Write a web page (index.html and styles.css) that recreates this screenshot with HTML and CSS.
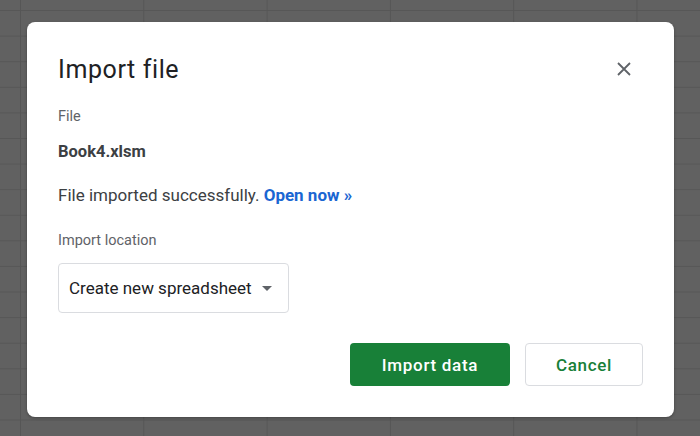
FILE: index.html
```html
<!DOCTYPE html>
<html lang="en">
<head>
    <meta charset="UTF-8">
    <title>Import file</title>
    <link rel="stylesheet" href="styles.css">
</head>
<body>
    <div class="sheet">
        <div class="dialog">
            <div class="dialogHead">
                <h1 class="title">Import file</h1>
                <button class="closeBtn" aria-label="Close">
                    <svg width="14" height="14" viewBox="0 0 14 14">
                        <path d="M1 1L13 13M13 1L1 13" stroke="#5f6368" stroke-width="1.8" fill="none"/>
                    </svg>
                </button>
            </div>

            <div class="label">File</div>
            <div class="fileName">Book4.xlsm</div>

            <div class="status">File imported successfully. <a href="#" class="openLink">Open now &raquo;</a></div>

            <div class="label locationLabel">Import location</div>
            <div class="select">
                <span>Create new spreadsheet</span>
                <span class="caret"></span>
            </div>

            <div class="actions">
                <button class="btn primary">Import data</button>
                <button class="btn secondary">Cancel</button>
            </div>
        </div>
    </div>
</body>
</html>
```

FILE: styles.css
```css
html, body{
    margin: 0;
    height: 100%;
}
body{
    background-color: #616161;
    background-image:
        linear-gradient(to right, #565656 1px, transparent 1px),
        linear-gradient(to bottom, #575757 1px, transparent 1px);
    background-size: 123.3px 25.6px;
    background-position: 20px 10px;
    font-family: Roboto, "Liberation Sans", Arial, sans-serif;
    overflow: hidden;
}
.sheet{
    padding: 22px 26px 0 27px;
}
.dialog{
    width: 647px;
    height: 395px;
    box-sizing: border-box;
    background: #fff;
    border-radius: 8px;
    box-shadow: 0 1px 3px rgba(0, 0, 0, 0.3);
    padding: 28px 31px 0 31px;
}
.dialogHead{
    display: flex;
    justify-content: space-between;
    align-items: center;
    height: 38px;
}
.title{
    margin: 0;
    font-size: 25px;
    font-weight: 400;
    color: #202124;
    letter-spacing: 0.6px;
}
.closeBtn{
    border: none;
    background: none;
    padding: 0;
    margin-right: 12px;
    width: 14px;
    height: 14px;
    display: flex;
}
.label{
    margin-top: 19px;
    font-size: 14.5px;
    color: #5f6368;
    line-height: 20px;
}
.locationLabel{
    margin-top: 25px;
}
.fileName{
    margin-top: 14px;
    font-size: 16.5px;
    font-weight: 700;
    color: #3c4043;
    line-height: 22px;
}
.status{
    margin-top: 21px;
    font-size: 17px;
    color: #3c4043;
    line-height: 22px;
}
.openLink{
    color: #1a66d2;
    font-weight: 700;
    text-decoration: none;
}
.select{
    margin-top: 12px;
    width: 231px;
    height: 50px;
    box-sizing: border-box;
    border: 1px solid #dadce0;
    border-radius: 4px;
    display: flex;
    align-items: center;
    padding: 0 16px 0 10px;
    justify-content: space-between;
    font-size: 17px;
    color: #202124;
}
.caret{
    width: 0;
    height: 0;
    border-left: 5px solid transparent;
    border-right: 5px solid transparent;
    border-top: 5px solid #5f6368;
}
.actions{
    margin-top: 30px;
    display: flex;
    justify-content: flex-end;
    gap: 15px;
}
.btn{
    height: 43px;
    border-radius: 4px;
    font-family: Roboto, "Liberation Sans", Arial, sans-serif;
    font-size: 17px;
    font-weight: 500;
    letter-spacing: 0.7px;
}
.primary{
    width: 160px;
    background: #188038;
    color: #fff;
    border: none;
}
.secondary{
    width: 118px;
    background: #fff;
    color: #188038;
    border: 1px solid #dadce0;
}
```
